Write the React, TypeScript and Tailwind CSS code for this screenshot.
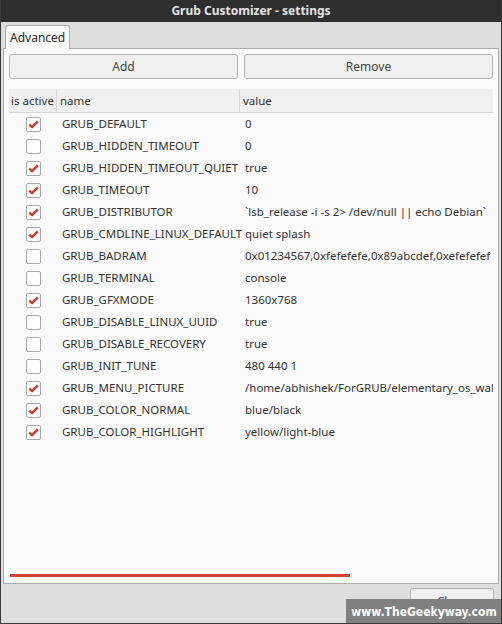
const rows: [boolean, string, string][] = [
  [true, 'GRUB_DEFAULT', '0'],
  [false, 'GRUB_HIDDEN_TIMEOUT', '0'],
  [true, 'GRUB_HIDDEN_TIMEOUT_QUIET', 'true'],
  [true, 'GRUB_TIMEOUT', '10'],
  [true, 'GRUB_DISTRIBUTOR', '`lsb_release -i -s 2> /dev/null || echo Debian`'],
  [true, 'GRUB_CMDLINE_LINUX_DEFAULT', 'quiet splash'],
  [false, 'GRUB_BADRAM', '0x01234567,0xfefefefe,0x89abcdef,0xefefefef'],
  [false, 'GRUB_TERMINAL', 'console'],
  [true, 'GRUB_GFXMODE', '1360x768'],
  [false, 'GRUB_DISABLE_LINUX_UUID', 'true'],
  [false, 'GRUB_DISABLE_RECOVERY', 'true'],
  [false, 'GRUB_INIT_TUNE', '480 440 1'],
  [true, 'GRUB_MENU_PICTURE', '/home/abhishek/ForGRUB/elementary_os_wallpaper.jpg'],
  [true, 'GRUB_COLOR_NORMAL', 'blue/black'],
  [true, 'GRUB_COLOR_HIGHLIGHT', 'yellow/light-blue'],
]

const Check = ({ on }: { on: boolean }) => (
  <div className="w-[15px] h-[15px] rounded-[2px] border border-[#a8a8a8] bg-white flex items-center justify-center">
    {on && (
      <svg width="11" height="9" viewBox="0 0 11 9">
        <path d="M1.2 4.6 L4 7.2 L9.8 1.4" fill="none" stroke="#d2392b" strokeWidth="2.4" strokeLinejoin="round" />
      </svg>
    )}
  </div>
)

export default function App() {
  return (
    <div
      className="w-[502px] h-[624px] flex flex-col bg-[#dedede] border-x border-b border-[#3a3a3a] overflow-hidden text-[#333] text-[11.5px]"
      style={{ fontFamily: '"Noto Sans", "Open Sans", sans-serif' }}
    >
      {/* title bar */}
      <div className="h-[22px] shrink-0 bg-[#2e2e2e] flex items-center justify-center text-[#e4e4e4] font-bold text-[12px]">
        Grub Customizer - settings
      </div>

      {/* tabs */}
      <div className="h-[26px] shrink-0 flex items-end pl-[4px]">
        <div className="h-[24px] px-[4px] flex items-center bg-[#fafafa] border border-b-0 border-[#acacac] rounded-t-[3px] relative top-[1px] text-[12px] text-[#2a2a2a]">
          Advanced
        </div>
      </div>

      {/* panel */}
      <div className="mx-[2px] h-[536px] shrink-0 bg-[#fafafa] border border-[#acacac] flex flex-col px-[5px] pt-[5px]">
        <div className="flex gap-[6px]">
          <button className="w-[229px] h-[25px] bg-[#f0f0f0] border border-[#b5b5b5] rounded-[3px] text-[12px] text-[#444]">Add</button>
          <button className="flex-1 h-[25px] bg-[#f0f0f0] border border-[#b5b5b5] rounded-[3px] text-[12px] text-[#444]">Remove</button>
        </div>

        <div className="mt-[10px] h-[24px] flex bg-[#f0f0f0] border-b border-[#d8d8d8] text-[11.5px] text-[#333]">
          <div className="w-[48px] pl-[2px] flex items-center border-r border-[#d8d8d8]">is active</div>
          <div className="w-[183px] pl-[3px] flex items-center border-r border-[#d8d8d8]">name</div>
          <div className="flex-1 pl-[3px] flex items-center">value</div>
        </div>

        <div className="flex flex-col flex-1 overflow-hidden">
          {rows.map(([on, name, value]) => (
            <div key={name} className="h-[22px] flex items-center text-[11.5px] text-[#333] whitespace-nowrap">
              <div className="w-[48px] flex justify-center shrink-0 pl-[1px]">
                <Check on={on} />
              </div>
              <div className="w-[183px] pl-[5px] shrink-0">{name}</div>
              <div className="pl-[5px] overflow-hidden">{value}</div>
            </div>
          ))}
        </div>

        {/* horizontal scroll indicator */}
        <div className="h-[3px] w-[340px] ml-[1px] mb-[6px] bg-[#d04535]" />
      </div>

      {/* footer */}
      <div className="flex-1 relative">
        <button className="absolute right-[7px] top-[4px] w-[84px] h-[26px] bg-[#f0f0f0] border border-[#b5b5b5] rounded-[3px] text-[12px] text-[#444] pt-[2px]">
          Close
        </button>
        <div
          className="absolute right-[-1px] bottom-[-1px] w-[156px] h-[25px] bg-[#808080] flex items-center justify-center text-white font-bold text-[12px]"
          style={{ fontFamily: '"DejaVu Sans Condensed", "DejaVu Sans", sans-serif' }}
        >
          www.TheGeekyway.com
        </div>
      </div>
    </div>
  )
}
